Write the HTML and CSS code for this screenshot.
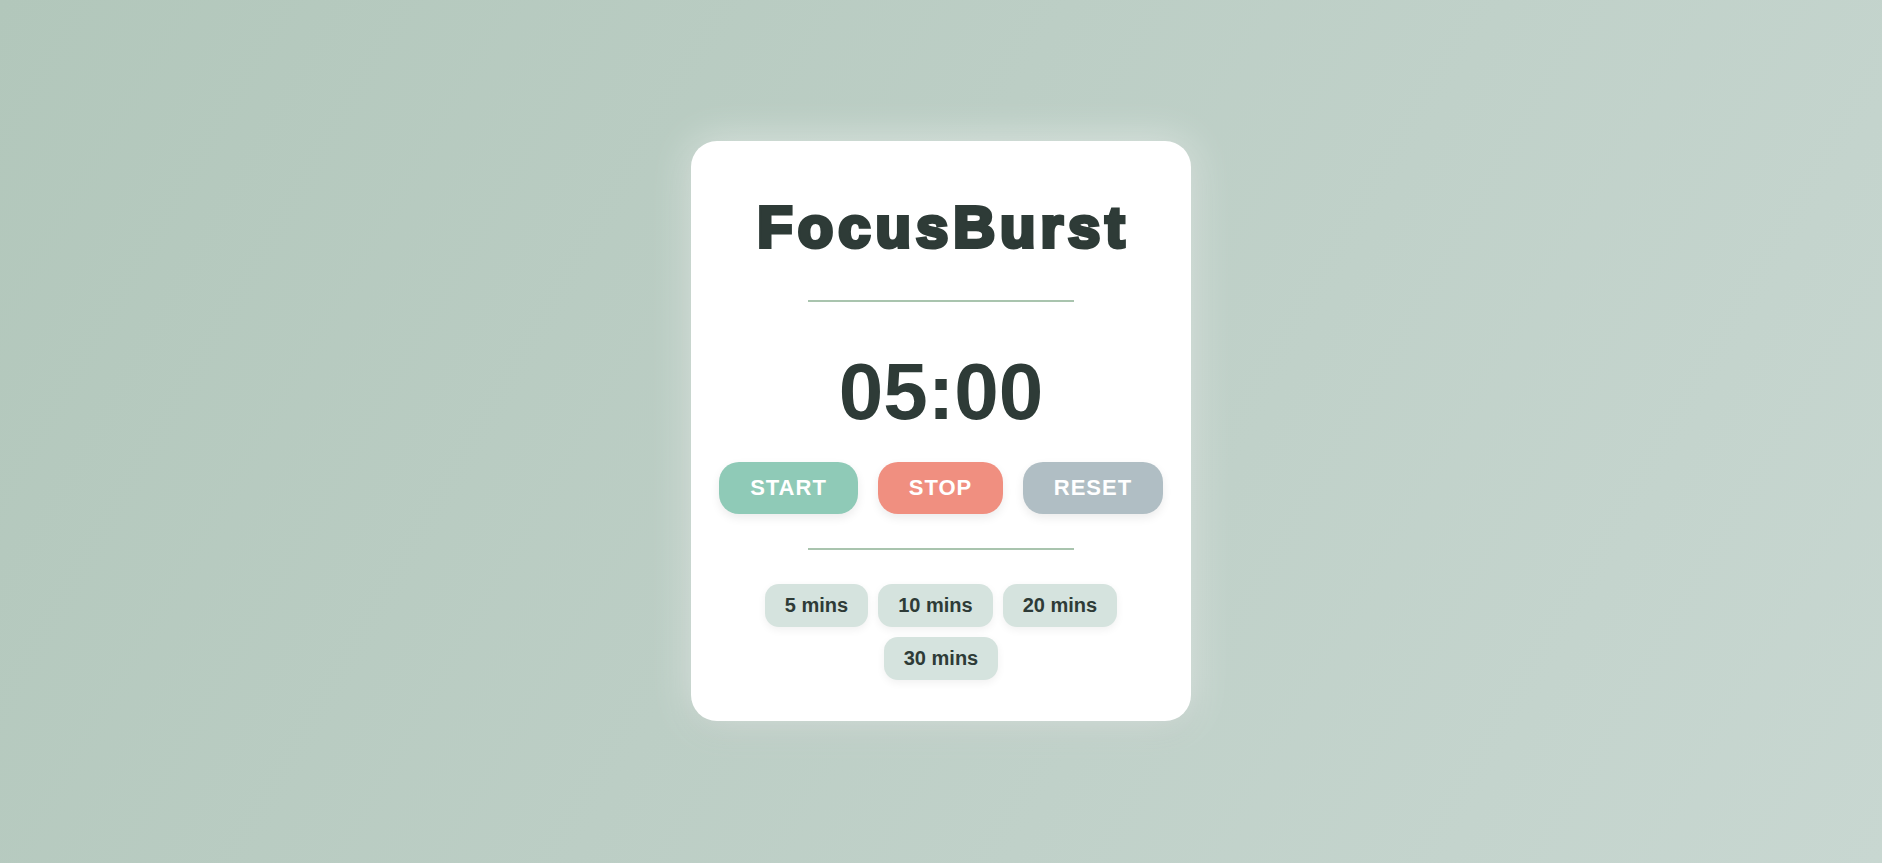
FILE: index.html
```html
<!DOCTYPE html>
<html lang="en">
<head>
<meta charset="utf-8">
<title>FocusBurst</title>
<link rel="stylesheet" href="styles.css">
</head>
<body>
<main class="page">
  <section class="card">
    <h1 class="title">FocusBurst</h1>
    <hr class="divider">
    <div class="timer">05:00</div>
    <div class="controls">
      <button class="btn btn-start">START</button>
      <button class="btn btn-stop">STOP</button>
      <button class="btn btn-reset">RESET</button>
    </div>
    <hr class="divider divider-low">
    <div class="presets">
      <button class="preset">5 mins</button>
      <button class="preset">10 mins</button>
      <button class="preset">20 mins</button>
      <button class="preset">30 mins</button>
    </div>
  </section>
</main>
</body>
</html>
```

FILE: styles.css
```css
* { box-sizing: border-box; }

html, body {
  margin: 0;
  height: 100%;
}

body {
  font-family: "Liberation Sans", Arial, sans-serif;
  background: linear-gradient(120deg, #b2c7bb 0%, #bccec5 45%, #c8d7d1 100%);
  color: #2e3b37;
}

.page {
  height: 100%;
  display: flex;
  justify-content: center;
  padding-top: 141px;
}

.card {
  width: 500px;
  height: 580px;
  background: #ffffff;
  border-radius: 26px;
  box-shadow: 0 0 40px rgba(255, 255, 255, 0.55), 0 12px 30px rgba(0, 0, 0, 0.06);
  display: flex;
  flex-direction: column;
  align-items: center;
  padding: 0 28px;
}

.title {
  margin: 56px 0 0 5px;
  font-size: 58px;
  line-height: 60px;
  font-weight: 700;
  letter-spacing: 5px;
  color: #2e3b37;
  -webkit-text-stroke: 4px #2e3b37;
  paint-order: stroke fill;
}

.divider {
  width: 266px;
  height: 2px;
  border: 0;
  margin: 43px 0 0;
  background: #a9c4ae;
}

.timer {
  margin-top: 50px;
  font-size: 80px;
  line-height: 80px;
  font-weight: 700;
  color: #2e3b37;
}

.controls {
  display: flex;
  gap: 20px;
  margin-top: 30px;
}

.btn {
  height: 52px;
  border: 0;
  border-radius: 20px;
  padding: 0 30px;
  font-family: "Liberation Sans", Arial, sans-serif;
  font-size: 22px;
  font-weight: 700;
  letter-spacing: 1px;
  color: #ffffff;
  box-shadow: 0 4px 10px rgba(0, 0, 0, 0.08);
}

.btn-start { background: #8fcab7; width: 139px; }
.btn-stop { background: #f08f80; width: 125px; }
.btn-reset { background: #b0bec4; width: 140px; }

.divider-low {
  margin-top: 34px;
}

.presets {
  width: 420px;
  display: flex;
  flex-wrap: wrap;
  justify-content: center;
  gap: 10px;
  margin-top: 34px;
}

.preset {
  height: 43px;
  border: 0;
  border-radius: 14px;
  padding: 0 20px;
  background: #d5e3de;
  color: #2e3b37;
  font-family: "Liberation Sans", Arial, sans-serif;
  font-size: 20px;
  font-weight: 700;
  box-shadow: 0 3px 8px rgba(0, 0, 0, 0.06);
}
```
